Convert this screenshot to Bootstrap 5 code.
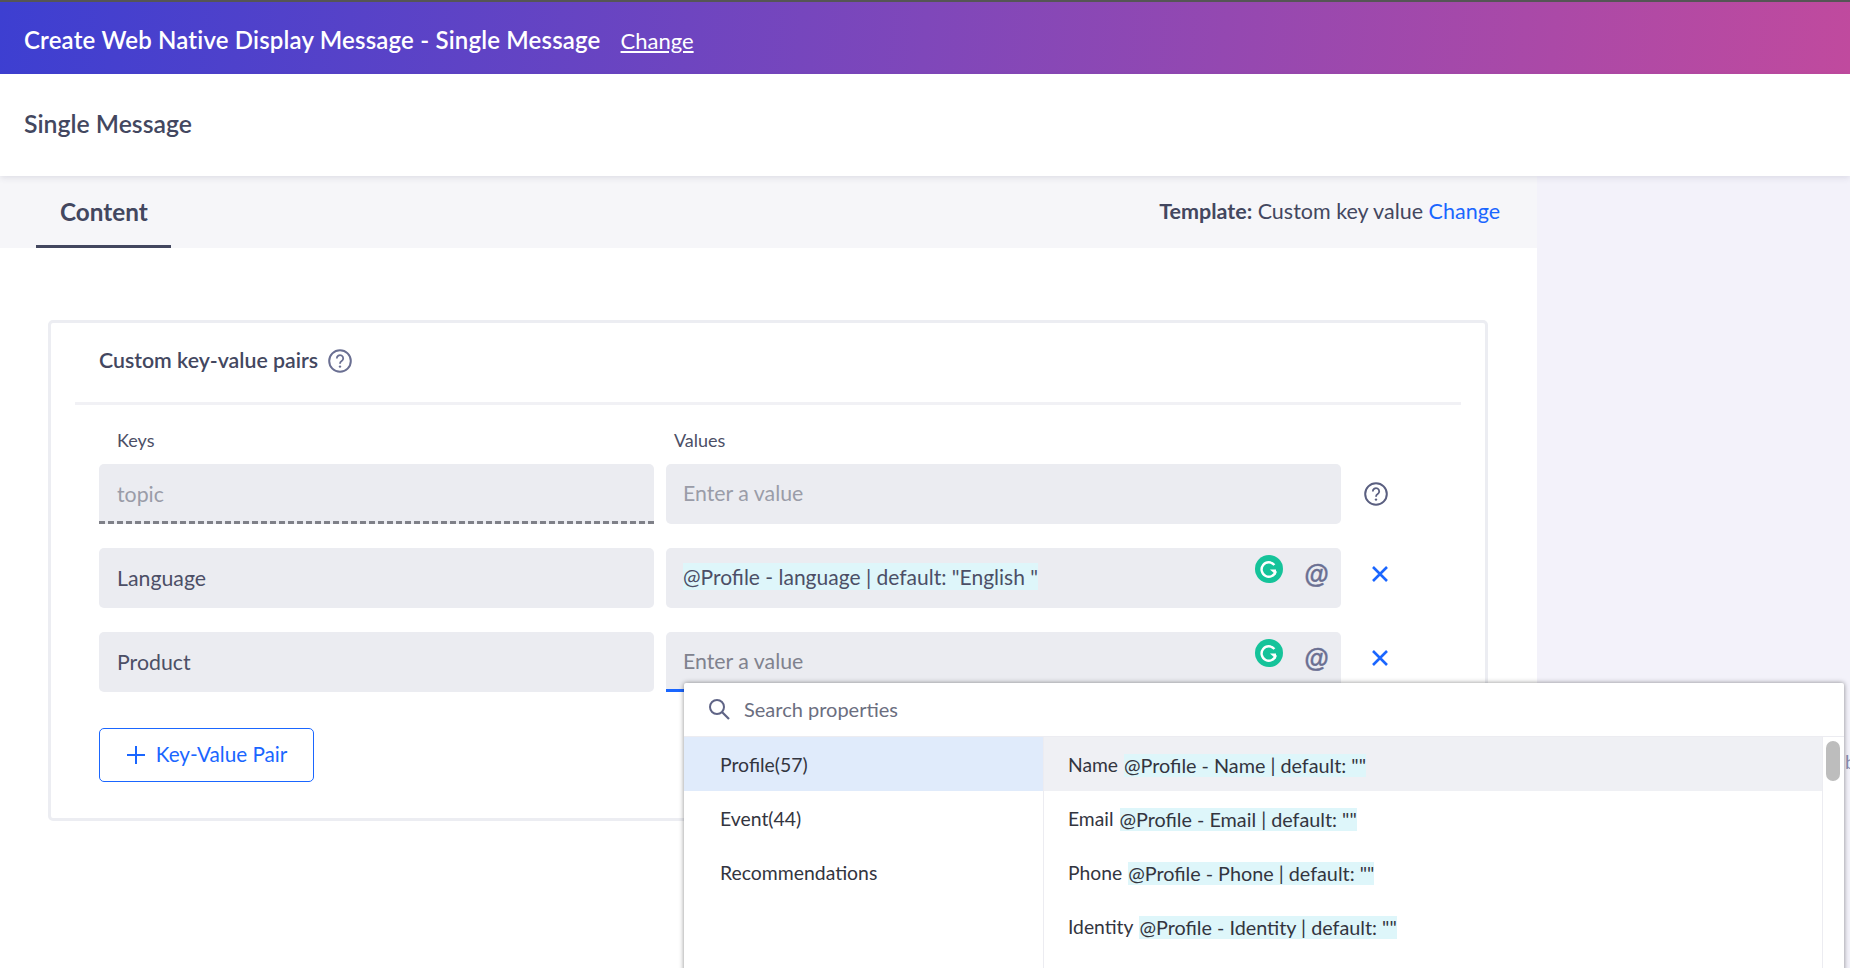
<!DOCTYPE html>
<html lang="en">
<head>
<meta charset="utf-8">
<title>Create Web Native Display Message</title>
<link href="https://cdn.jsdelivr.net/npm/bootstrap@5.3.0/dist/css/bootstrap.min.css" rel="stylesheet">
<style>
html,body{height:968px;overflow:hidden}
body{font-family:"Lato","Open Sans",sans-serif;color:#43475f;background:#fff;position:relative}
.topstrip{height:74px;border-top:2px solid #555;background:linear-gradient(95deg,#3d3fd1 0%,#7f47ba 50%,#c04a9e 100%);color:#fff;padding:4px 0 0 24px;gap:20px}
.topstrip h1{font-size:24px;font-weight:600;margin:0;letter-spacing:.18px}
.topstrip a{color:#fff;font-size:22px}
.subhead{height:102px;padding:0 0 2px 24px;font-size:24.800px;font-weight:600;box-shadow:0 2px 6px rgba(60,60,90,.12);position:relative;z-index:2;background:#fff}
.mainarea{height:792px}
.leftpane{width:1537px;flex:none}
.sidepane{flex:1;background:#f3f2fa}
.tabbar{height:72px;background:#f6f6f9;padding:0 37px 0 36px}
.tabitem{width:135px;height:72px;border-bottom:3px solid #43475f;font-size:24.300px;font-weight:700;padding:4px 0 0 24px}
.tplnote{font-size:21.500px;margin-bottom:2px}
.tplnote a{color:#1a66ff;text-decoration:none}
.kvcard{margin:72px 49px 0 48px;height:501px;border:3px solid #ecedf2;border-radius:5px;padding:0 24px}
.kvhead{height:82px;border-bottom:3px solid #f1f1f5;padding:0 0 3px 24px;gap:10px;font-size:21.300px;font-weight:600}
.kvgrid{display:grid;grid-template-columns:555px 675px 80px;column-gap:12px;row-gap:24px;padding-left:24px;align-items:start}
.kvlabel{font-size:18px;height:59px;padding:0 18px 10px;display:flex;align-items:flex-end;margin-bottom:-24px;color:#4c4f66}
.kvlabel-val{padding-left:8px}
.kvbox{height:60px;background:#ebecf1;border-radius:5px;padding:1px 18px 0;font-size:21.300px;position:relative;color:#4c4f66}
.kvbox.valcell{padding-left:17px;padding-top:0}
.kvbox.muted{color:#9a9ca8}
.kvbox.dimmer{color:#80828e}
.kvbox.dashed{border-radius:5px 5px 0 0}
.kvbox.dashed::after{content:"";position:absolute;left:0;right:0;bottom:0;height:3px;background:repeating-linear-gradient(90deg,#7f8088 0 6px,transparent 6px 9px)}
.kvbox.focusline::after{content:"";position:absolute;left:0;right:0;bottom:0;height:3px;background:#1a66ff}
.tokenmark{background:#def6fa;line-height:27px;font-size:21px}
.boxtools{position:absolute;right:0;top:0;width:86px;height:50px}
.at-glyph{position:absolute;left:49px;top:10px;font-family:"Liberation Sans",sans-serif;font-size:25px;font-weight:700;font-style:italic;color:#6a6f92;line-height:32px;-webkit-text-stroke:.4px #6a6f92}
.g-badge{position:absolute;left:0;top:7px}
.rowact{height:60px;padding-left:18px}
.rowact.helpcell{padding-left:11px}
.addbtn{margin:36px 0 0 24px;width:215px;height:54px;border:1.5px solid #1a66ff;border-radius:5px;color:#1a66ff;background:#fff;font-size:20.700px;gap:10px;padding:0}
.addbtn:hover{color:#1a66ff;background:#fff;border-color:#1a66ff}
.proppopup{position:absolute;left:684px;top:683px;width:1160px;height:300px;background:#fff;box-shadow:0 0 5px rgba(0,0,0,.45);border-radius:2px;z-index:5}
.propsearch{height:54px;padding:0 0 2px 24px;gap:14px;font-size:20px;color:#6b6e80;border-bottom:1px solid #ececf1}
.propbody{height:246px}
.propcats{width:360px;flex:none;border-right:1px solid #ececf1}
.propcat{height:54px;padding:2px 0 0 36px;font-size:19.400px;color:#33353f}
.propcat.on{background:#e0ebfb}
.propitems{flex:1}
.propitem{height:54px;padding:2px 0 0 24px;font-size:19.300px;color:#33353f;gap:6px}
.propitem.on{background:#eff0f4}
.propitem span{background:#def6fa;line-height:23px;font-size:19.800px}
.propscroll{width:22px;flex:none;border-left:1px solid #ececf1;padding:4px 4px 0 3px}
.propthumb{height:40px;background:#bdbdbd;border-radius:7px}
.peekchar{position:absolute;left:1845px;top:748px;font-size:19px;color:#8a8db0;z-index:1}
</style>
</head>
<body>
<header class="topstrip d-flex align-items-center">
  <h1>Create Web Native Display Message - Single Message</h1>
  <a href="#">Change</a>
</header>
<div class="subhead d-flex align-items-center">Single Message</div>
<div class="mainarea d-flex">
  <main class="leftpane">
    <div class="tabbar d-flex align-items-center justify-content-between">
      <div class="tabitem d-flex align-items-center">Content</div>
      <div class="tplnote"><b class="fw-bold">Template:</b> Custom key value <a href="#">Change</a></div>
    </div>
    <section class="kvcard">
      <div class="kvhead d-flex align-items-center">
        <span>Custom key-value pairs</span>
        <svg width="24" height="24" viewBox="0 0 24 24" fill="none"><circle cx="12" cy="12" r="10.8" stroke="#6a6f92" stroke-width="2"/><path d="M8.8 9.4a3.2 3.2 0 1 1 4.9 2.7c-1.1.7-1.7 1.3-1.7 2.6" stroke="#6a6f92" stroke-width="1.8" fill="none"/><circle cx="12" cy="17.6" r="1.2" fill="#6a6f92"/></svg>
      </div>
      <div class="kvgrid">
        <div class="kvlabel">Keys</div>
        <div class="kvlabel kvlabel-val">Values</div>
        <div></div>

        <div class="kvbox muted dashed d-flex align-items-center">topic</div>
        <div class="kvbox valcell muted d-flex align-items-center">Enter a value</div>
        <div class="rowact helpcell d-flex align-items-center">
          <svg width="24" height="24" viewBox="0 0 24 24" fill="none"><circle cx="12" cy="12" r="10.8" stroke="#5a5f80" stroke-width="2"/><path d="M8.8 9.4a3.2 3.2 0 1 1 4.9 2.7c-1.1.7-1.7 1.3-1.7 2.6" stroke="#5a5f80" stroke-width="1.8" fill="none"/><circle cx="12" cy="17.6" r="1.2" fill="#5a5f80"/></svg>
        </div>

        <div class="kvbox d-flex align-items-center">Language</div>
        <div class="kvbox valcell d-flex align-items-center pb-1"><span class="tokenmark">@Profile - language | default: "English "</span>
          <div class="boxtools">
            <svg class="g-badge" width="28" height="28" viewBox="0 0 28 28"><circle cx="14" cy="14" r="14" fill="#15c39a"/><path d="M19.4 10a7.2 7.2 0 1 0 1.4 6.2" fill="none" stroke="#fff" stroke-width="2.4"/><path d="M15 14.600h6v5.400z" fill="#fff"/></svg>
            <span class="at-glyph">@</span>
          </div>
        </div>
        <div class="rowact d-flex align-items-center pb-2">
          <svg width="18" height="18" viewBox="0 0 18 18"><path d="M2 2l14 14M16 2L2 16" stroke="#1a66ff" stroke-width="2.600" fill="none"/></svg>
        </div>

        <div class="kvbox d-flex align-items-center">Product</div>
        <div class="kvbox valcell dimmer focusline d-flex align-items-center">Enter a value
          <div class="boxtools">
            <svg class="g-badge" width="28" height="28" viewBox="0 0 28 28"><circle cx="14" cy="14" r="14" fill="#15c39a"/><path d="M19.4 10a7.2 7.2 0 1 0 1.4 6.2" fill="none" stroke="#fff" stroke-width="2.4"/><path d="M15 14.600h6v5.400z" fill="#fff"/></svg>
            <span class="at-glyph">@</span>
          </div>
        </div>
        <div class="rowact d-flex align-items-center pb-2">
          <svg width="18" height="18" viewBox="0 0 18 18"><path d="M2 2l14 14M16 2L2 16" stroke="#1a66ff" stroke-width="2.600" fill="none"/></svg>
        </div>
      </div>
      <button type="button" class="btn addbtn d-inline-flex align-items-center justify-content-center">
        <svg width="20" height="20" viewBox="0 0 20 20"><path d="M10 1v18M1 10h18" stroke="#1a66ff" stroke-width="2" fill="none"/></svg>
        Key-Value Pair
      </button>
    </section>
  </main>
  <aside class="sidepane"></aside>
</div>
<span class="peekchar">b</span>
<div class="proppopup">
  <div class="propsearch d-flex align-items-center">
    <svg width="22" height="22" viewBox="0 0 22 22" fill="none"><circle cx="9" cy="9" r="7" stroke="#5f6486" stroke-width="2"/><path d="M14 14l7 7" stroke="#5f6486" stroke-width="2.200"/></svg>
    <span>Search properties</span>
  </div>
  <div class="propbody d-flex">
    <div class="propcats">
      <div class="propcat on d-flex align-items-center">Profile(57)</div>
      <div class="propcat d-flex align-items-center">Event(44)</div>
      <div class="propcat d-flex align-items-center">Recommendations</div>
    </div>
    <div class="propitems">
      <div class="propitem on d-flex align-items-center">Name <span>@Profile - Name | default: ""</span></div>
      <div class="propitem d-flex align-items-center">Email <span>@Profile - Email | default: ""</span></div>
      <div class="propitem d-flex align-items-center">Phone <span>@Profile - Phone | default: ""</span></div>
      <div class="propitem d-flex align-items-center">Identity <span>@Profile - Identity | default: ""</span></div>
    </div>
    <div class="propscroll"><div class="propthumb"></div></div>
  </div>
</div>
<script src="https://cdn.jsdelivr.net/npm/bootstrap@5.3.0/dist/js/bootstrap.bundle.min.js"></script>
</body>
</html>
